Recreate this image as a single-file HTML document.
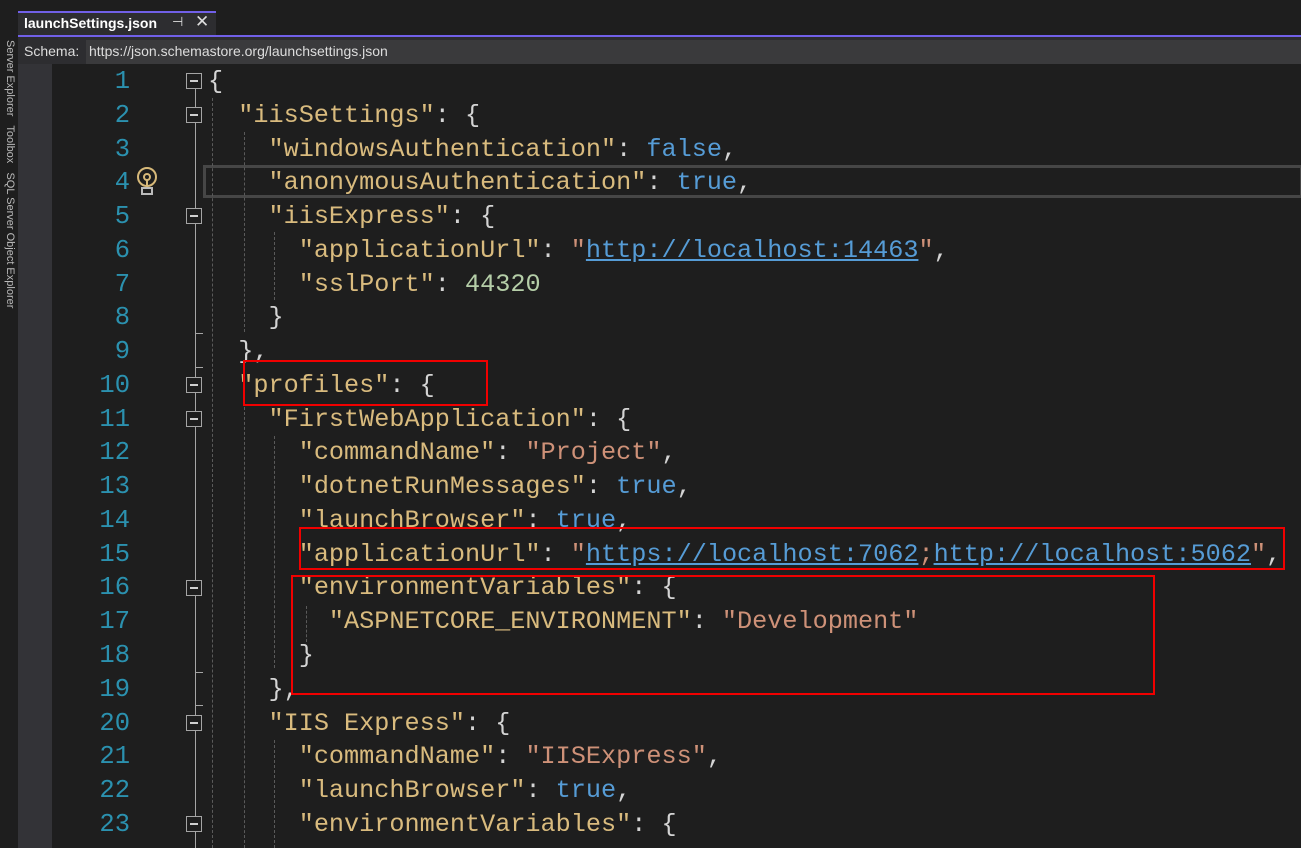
<!DOCTYPE html>
<html><head><meta charset="utf-8"><style>
body{margin:0;width:1301px;height:848px;background:#1e1e1e;overflow:hidden;position:relative;font-family:"Liberation Sans",sans-serif}
.a{position:absolute}
.code{position:absolute;left:208px;top:65px;font-family:"Liberation Mono",monospace;font-size:25.2px;line-height:33.77px;white-space:pre;color:#d4d4d4}
.ln{position:absolute;left:60px;width:70px;top:65px;font-family:"Liberation Mono",monospace;font-size:25.5px;line-height:33.77px;text-align:right;color:#2b91af;white-space:pre}
.k{color:#d9bb7e}.s{color:#ce9178}.b{color:#569cd6}.n{color:#b5cea8}.u{color:#569cd6;text-decoration:underline}
.f{position:absolute;left:186px;width:14px;height:14px;border:1px solid #a5a5a5;background:#1e1e1e}
.f:after{content:"";position:absolute;left:3px;right:3px;top:6px;height:2px;background:#d0d0d0}
.g{position:absolute;border-left:1px dashed #5a5a5a}
.r{position:absolute;border:2px solid #f00000}
</style></head><body>
<div class="a" style="left:0;top:0;width:17px;height:848px;background:#1e1e1e"></div>
<div class="a" style="left:2px;top:40px;width:14px;height:340px;color:#bbb;font-size:11px;writing-mode:vertical-rl;white-space:nowrap;overflow:hidden">Server Explorer &nbsp; Toolbox &nbsp; SQL Server Object Explorer</div>
<div class="a" style="left:18px;top:11px;width:198px;height:25px;background:#2d2d30;border-top:2px solid #7160e8;box-sizing:border-box"></div>
<div class="a" style="left:24px;top:15px;color:#fff;font-weight:bold;font-size:14px">launchSettings.json</div>
<div class="a" style="left:172px;top:14px;color:#ddd;font-size:13px">⊣</div>
<div class="a" style="left:195px;top:12px;color:#ddd;font-size:17px">✕</div>
<div class="a" style="left:18px;top:35px;width:1283px;height:2px;background:#7160e8"></div>
<div class="a" style="left:18px;top:37px;width:1283px;height:27px;background:#2d2d30"></div>
<div class="a" style="left:86px;top:40px;width:1215px;height:24px;background:#3a3a3c"></div>
<div class="a" style="left:24px;top:43px;color:#ddd;font-size:14px">Schema:</div>
<div class="a" style="left:89px;top:43px;color:#ddd;font-size:14px">https://json.schemastore.org/launchsettings.json</div>
<div class="a" style="left:18px;top:64px;width:34px;height:784px;background:#333337"></div>
<div class="a" style="left:203px;top:165px;width:1100px;height:33px;border:3px solid #464646;box-sizing:border-box"></div>
<div class="a" style="left:195px;top:80px;width:1px;height:768px;background:#a5a5a5"></div>
<div class="a" style="left:195px;top:333px;width:8px;height:1px;background:#a5a5a5"></div>
<div class="a" style="left:195px;top:367px;width:8px;height:1px;background:#a5a5a5"></div>
<div class="a" style="left:195px;top:672px;width:8px;height:1px;background:#a5a5a5"></div>
<div class="a" style="left:195px;top:705px;width:8px;height:1px;background:#a5a5a5"></div>
<div class="g" style="left:212px;top:98px;height:750px"></div>
<div class="g" style="left:244px;top:132px;height:200px"></div>
<div class="g" style="left:244px;top:402px;height:446px"></div>
<div class="g" style="left:274px;top:232px;height:68px"></div>
<div class="g" style="left:274px;top:436px;height:232px"></div>
<div class="g" style="left:274px;top:740px;height:108px"></div>
<div class="g" style="left:306px;top:606px;height:36px"></div>
<div class="f" style="top:73px"></div><div class="f" style="top:107px"></div><div class="f" style="top:208px"></div>
<div class="f" style="top:377px"></div><div class="f" style="top:411px"></div><div class="f" style="top:580px"></div>
<div class="f" style="top:715px"></div><div class="f" style="top:816px"></div>
<svg class="a" style="left:135px;top:167px" width="24" height="30" viewBox="0 0 24 30"><circle cx="12" cy="10" r="9" fill="none" stroke="#d7b979" stroke-width="2"/><circle cx="12" cy="10" r="3" fill="none" stroke="#d7b979" stroke-width="2"/><line x1="12" y1="13" x2="12" y2="20" stroke="#d7b979" stroke-width="2"/><rect x="7" y="21" width="10" height="6" fill="none" stroke="#bbb" stroke-width="2"/></svg>
<div class="ln">1
2
3
4
5
6
7
8
9
10
11
12
13
14
15
16
17
18
19
20
21
22
23</div>
<div class="code">{
  <span class="k">"iisSettings"</span>: {
    <span class="k">"windowsAuthentication"</span>: <span class="b">false</span>,
    <span class="k">"anonymousAuthentication"</span>: <span class="b">true</span>,
    <span class="k">"iisExpress"</span>: {
      <span class="k">"applicationUrl"</span>: <span class="s">"</span><span class="u">http://localhost:14463</span><span class="s">"</span>,
      <span class="k">"sslPort"</span>: <span class="n">44320</span>
    }
  },
  <span class="k">"profiles"</span>: {
    <span class="k">"FirstWebApplication"</span>: {
      <span class="k">"commandName"</span>: <span class="s">"Project"</span>,
      <span class="k">"dotnetRunMessages"</span>: <span class="b">true</span>,
      <span class="k">"launchBrowser"</span>: <span class="b">true</span>,
      <span class="k">"applicationUrl"</span>: <span class="s">"</span><span class="u">https://localhost:7062</span><span class="s">;</span><span class="u">http://localhost:5062</span><span class="s">"</span>,
      <span class="k">"environmentVariables"</span>: {
        <span class="k">"ASPNETCORE_ENVIRONMENT"</span>: <span class="s">"Development"</span>
      }
    },
    <span class="k">"IIS Express"</span>: {
      <span class="k">"commandName"</span>: <span class="s">"IISExpress"</span>,
      <span class="k">"launchBrowser"</span>: <span class="b">true</span>,
      <span class="k">"environmentVariables"</span>: {</div>
<div class="r" style="left:243px;top:360px;width:241px;height:42px"></div>
<div class="r" style="left:299px;top:527px;width:982px;height:39px"></div>
<div class="r" style="left:291px;top:575px;width:860px;height:116px"></div>
</body></html>
